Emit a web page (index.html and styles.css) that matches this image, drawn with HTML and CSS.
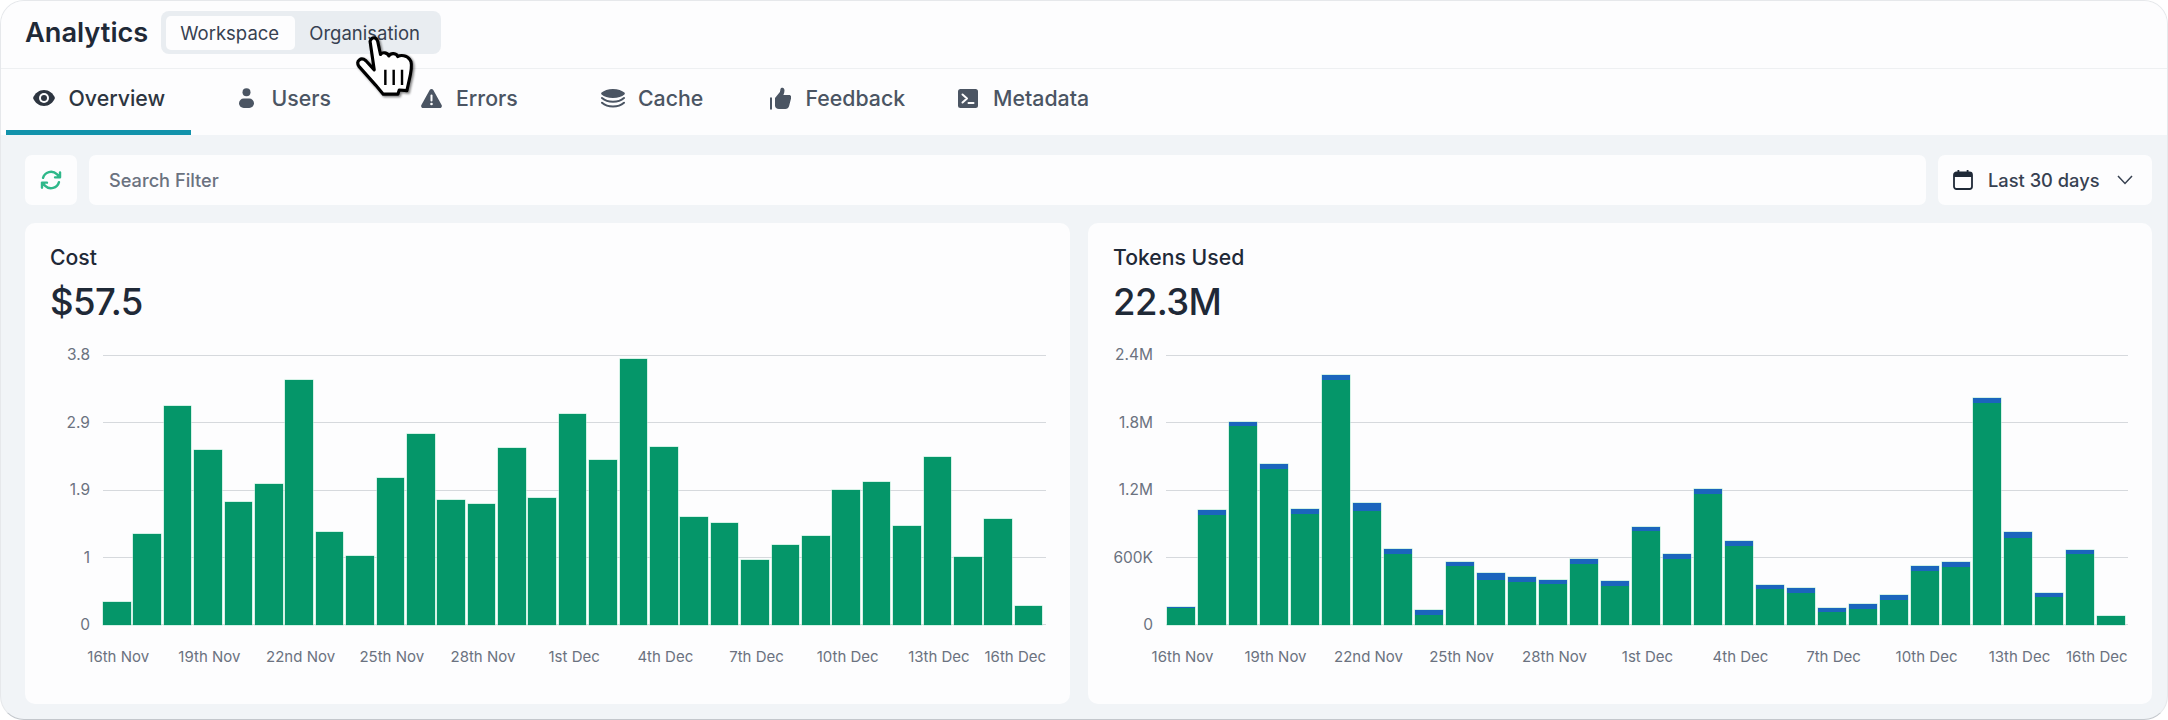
FILE: index.html
```html
<!DOCTYPE html>
<html lang="en">
<head>
<meta charset="utf-8">
<title>Analytics</title>
<link rel="stylesheet" href="styles.css">
</head>
<body>
<div class="frame">
  <header class="header">
    <h1 class="title">Analytics</h1>
    <div class="segment">
      <span class="segment-item segment-active">Workspace</span>
      <span class="segment-item">Organisation</span>
    </div>
  </header>
  <nav class="tabs">
    <a class="tab tab-overview tab-active">
      <span class="tab-icon"><svg width="22" height="16" viewBox="0 0 22 16"><path fill="currentColor" d="M11 0C6 0 2 3.2 0 8c2 4.8 6 8 11 8s9-3.200 11-8c-2-4.800-6-8-11-8z"/><circle cx="11" cy="8" r="5" fill="#fdfdfe"/><circle cx="11" cy="8" r="3" fill="currentColor"/></svg></span>Overview
    </a>
    <a class="tab tab-users">
      <span class="tab-icon"><svg width="15" height="20" viewBox="0 0 15 20"><circle cx="7.500" cy="4.200" r="4" fill="currentColor"/><rect x="0" y="10.500" width="15" height="9.500" rx="4.700" fill="currentColor"/></svg></span>Users
    </a>
    <a class="tab tab-errors">
      <span class="tab-icon"><svg width="21" height="19" viewBox="0 0 21 19"><path fill="currentColor" d="M8.700 1.100c.8-1.400 2.800-1.400 3.600 0l8.300 14.800c.8 1.400-.2 3.100-1.800 3.100H2.200C.6 19-.4 17.300.4 15.900z"/><rect x="9.500" y="5.500" width="2" height="7" rx="1" fill="#fdfdfe"/><circle cx="10.500" cy="15" r="1.300" fill="#fdfdfe"/></svg></span>Errors
    </a>
    <a class="tab tab-cache">
      <span class="tab-icon"><svg width="24" height="19" viewBox="0 0 24 19"><path fill="currentColor" d="M12 0c5 0 9 1.600 11.400 3.600.6.500.6 1.300 0 1.800C21 7.500 17 9 12 9S3 7.500.6 5.400c-.6-.5-.6-1.300 0-1.800C3 1.600 7 0 12 0z"/><path fill="none" stroke="currentColor" stroke-width="2" stroke-linecap="round" d="M1 9c2.500 2.200 6.500 3.800 11 3.800S20.500 11.200 23 9M1 13.700c2.500 2.200 6.500 3.800 11 3.800s8.500-1.600 11-3.800"/></svg></span>Cache
    </a>
    <a class="tab tab-feedback">
      <span class="tab-icon"><svg width="21" height="23" viewBox="0 0 21 23"><rect x="0" y="10.500" width="2" height="12" fill="currentColor"/><path fill="currentColor" d="M5 11l4.500-5.500c.6-.8.8-2 .9-3.300.1-1.600 3.400-2.500 4 .6.300 1.500-.2 3.300-1 5.200h5.500c2.300 0 2.900 2.300 2 4l-1.800 7c-.6 2-1.800 3-3.800 3H9c-2.400 0-4-1.400-4-3.500z"/></svg></span>Feedback
    </a>
    <a class="tab tab-metadata">
      <span class="tab-icon"><svg width="20" height="19" viewBox="0 0 20 19"><rect width="20" height="19" rx="2.500" fill="currentColor"/><path fill="none" stroke="#fdfdfe" stroke-width="2" stroke-linecap="round" stroke-linejoin="round" d="M4.500 5.500 9 9.500l-4.500 4M10.500 14h5"/></svg></span>Metadata
    </a>
  </nav>
  <main class="content">
    <div class="toolbar">
      <button class="refresh" aria-label="Refresh"><svg width="24" height="24" viewBox="0 0 24 24" fill="none" stroke="#2fb88a" stroke-width="2.400" stroke-linecap="round" stroke-linejoin="round"><path d="M16.020 9.350h5V4.360M2.990 19.640v-4.990h4.990M2.990 14.650l3.180 3.180a8.250 8.250 0 0 0 13.800-3.700M4.030 9.870a8.250 8.250 0 0 1 13.800-3.700l3.190 3.180"/></svg></button>
      <div class="search">Search Filter</div>
      <button class="date">
        <svg width="20" height="20" viewBox="0 0 20 20"><rect x="1" y="2.500" width="18" height="16.500" rx="2.500" fill="none" stroke="#1f2937" stroke-width="1.800"/><path fill="#1f2937" d="M1 7V4.500C1 3.300 2 2.500 3 2.500h14c1 0 2 .8 2 2V7z"/><rect x="4.500" y="0" width="1.800" height="3.500" fill="#1f2937"/><rect x="13.700" y="0" width="1.800" height="3.500" fill="#1f2937"/></svg>
        <span class="date-label">Last 30 days</span>
        <svg width="16" height="10" viewBox="0 0 16 10"><path d="M1 1l7 7.500L15 1" fill="none" stroke="#374151" stroke-width="1.500"/></svg>
      </button>
    </div>
    <div class="cards">
      <section class="card">
        <h2 class="card-title">Cost</h2>
        <div class="card-value">$57.5</div>
        <div class="chart">
          <div class="y-axis"><span>3.8</span><span>2.9</span><span>1.9</span><span>1</span><span>0</span></div>
          <div class="plot">
            <div class="grid-lines"><i></i><i></i><i></i><i></i><i></i></div>
            <div class="bars bars-cost">
              <div class="bar"><i class="seg-green" style="height:23px"></i></div>
              <div class="bar"><i class="seg-green" style="height:91px"></i></div>
              <div class="bar"><i class="seg-green" style="height:219px"></i></div>
              <div class="bar"><i class="seg-green" style="height:175.3px"></i></div>
              <div class="bar"><i class="seg-green" style="height:122.7px"></i></div>
              <div class="bar"><i class="seg-green" style="height:141.3px"></i></div>
              <div class="bar"><i class="seg-green" style="height:245px"></i></div>
              <div class="bar"><i class="seg-green" style="height:93.3px"></i></div>
              <div class="bar"><i class="seg-green" style="height:69.3px"></i></div>
              <div class="bar"><i class="seg-green" style="height:147.3px"></i></div>
              <div class="bar"><i class="seg-green" style="height:190.7px"></i></div>
              <div class="bar"><i class="seg-green" style="height:125px"></i></div>
              <div class="bar"><i class="seg-green" style="height:121px"></i></div>
              <div class="bar"><i class="seg-green" style="height:177px"></i></div>
              <div class="bar"><i class="seg-green" style="height:127px"></i></div>
              <div class="bar"><i class="seg-green" style="height:211px"></i></div>
              <div class="bar"><i class="seg-green" style="height:165px"></i></div>
              <div class="bar"><i class="seg-green" style="height:265.7px"></i></div>
              <div class="bar"><i class="seg-green" style="height:177.7px"></i></div>
              <div class="bar"><i class="seg-green" style="height:107.7px"></i></div>
              <div class="bar"><i class="seg-green" style="height:101.7px"></i></div>
              <div class="bar"><i class="seg-green" style="height:65.3px"></i></div>
              <div class="bar"><i class="seg-green" style="height:79.7px"></i></div>
              <div class="bar"><i class="seg-green" style="height:89.3px"></i></div>
              <div class="bar"><i class="seg-green" style="height:135.3px"></i></div>
              <div class="bar"><i class="seg-green" style="height:142.7px"></i></div>
              <div class="bar"><i class="seg-green" style="height:99px"></i></div>
              <div class="bar"><i class="seg-green" style="height:168px"></i></div>
              <div class="bar"><i class="seg-green" style="height:67.7px"></i></div>
              <div class="bar"><i class="seg-green" style="height:105.7px"></i></div>
              <div class="bar"><i class="seg-green" style="height:19.3px"></i></div>
            </div>
          </div>
          <div class="x-axis x-axis-cost">
            <span>16th Nov</span><span>19th Nov</span><span>22nd Nov</span><span>25th Nov</span><span>28th Nov</span><span>1st Dec</span><span>4th Dec</span><span>7th Dec</span><span>10th Dec</span><span>13th Dec</span><span class="x-last">16th Dec</span>
          </div>
        </div>
      </section>
      <section class="card">
        <h2 class="card-title">Tokens Used</h2>
        <div class="card-value">22.3M</div>
        <div class="chart">
          <div class="y-axis"><span>2.4M</span><span>1.8M</span><span>1.2M</span><span>600K</span><span>0</span></div>
          <div class="plot">
            <div class="grid-lines"><i></i><i></i><i></i><i></i><i></i></div>
            <div class="bars bars-tokens">
              <div class="bar"><i class="seg-blue" style="height:1.3px"></i><i class="seg-green" style="height:16.7px"></i></div>
              <div class="bar"><i class="seg-blue" style="height:4.7px"></i><i class="seg-green" style="height:110px"></i></div>
              <div class="bar"><i class="seg-blue" style="height:4.7px"></i><i class="seg-green" style="height:198.7px"></i></div>
              <div class="bar"><i class="seg-blue" style="height:5.7px"></i><i class="seg-green" style="height:155.7px"></i></div>
              <div class="bar"><i class="seg-blue" style="height:5px"></i><i class="seg-green" style="height:111px"></i></div>
              <div class="bar"><i class="seg-blue" style="height:5px"></i><i class="seg-green" style="height:244.7px"></i></div>
              <div class="bar"><i class="seg-blue" style="height:8.3px"></i><i class="seg-green" style="height:113.7px"></i></div>
              <div class="bar"><i class="seg-blue" style="height:4.7px"></i><i class="seg-green" style="height:71px"></i></div>
              <div class="bar"><i class="seg-blue" style="height:4.7px"></i><i class="seg-green" style="height:10px"></i></div>
              <div class="bar"><i class="seg-blue" style="height:4.7px"></i><i class="seg-green" style="height:58.7px"></i></div>
              <div class="bar"><i class="seg-blue" style="height:6.7px"></i><i class="seg-green" style="height:45px"></i></div>
              <div class="bar"><i class="seg-blue" style="height:5.3px"></i><i class="seg-green" style="height:43px"></i></div>
              <div class="bar"><i class="seg-blue" style="height:4.3px"></i><i class="seg-green" style="height:41px"></i></div>
              <div class="bar"><i class="seg-blue" style="height:5px"></i><i class="seg-green" style="height:61.3px"></i></div>
              <div class="bar"><i class="seg-blue" style="height:4.7px"></i><i class="seg-green" style="height:39.3px"></i></div>
              <div class="bar"><i class="seg-blue" style="height:4.7px"></i><i class="seg-green" style="height:93.7px"></i></div>
              <div class="bar"><i class="seg-blue" style="height:5px"></i><i class="seg-green" style="height:66.3px"></i></div>
              <div class="bar"><i class="seg-blue" style="height:5.3px"></i><i class="seg-green" style="height:131px"></i></div>
              <div class="bar"><i class="seg-blue" style="height:5px"></i><i class="seg-green" style="height:79.3px"></i></div>
              <div class="bar"><i class="seg-blue" style="height:4.3px"></i><i class="seg-green" style="height:36px"></i></div>
              <div class="bar"><i class="seg-blue" style="height:4.7px"></i><i class="seg-green" style="height:32px"></i></div>
              <div class="bar"><i class="seg-blue" style="height:4px"></i><i class="seg-green" style="height:12.7px"></i></div>
              <div class="bar"><i class="seg-blue" style="height:4.7px"></i><i class="seg-green" style="height:16.3px"></i></div>
              <div class="bar"><i class="seg-blue" style="height:4.7px"></i><i class="seg-green" style="height:25px"></i></div>
              <div class="bar"><i class="seg-blue" style="height:5.3px"></i><i class="seg-green" style="height:54px"></i></div>
              <div class="bar"><i class="seg-blue" style="height:4.7px"></i><i class="seg-green" style="height:58.3px"></i></div>
              <div class="bar"><i class="seg-blue" style="height:5.7px"></i><i class="seg-green" style="height:221.7px"></i></div>
              <div class="bar"><i class="seg-blue" style="height:5.7px"></i><i class="seg-green" style="height:87px"></i></div>
              <div class="bar"><i class="seg-blue" style="height:4.3px"></i><i class="seg-green" style="height:28px"></i></div>
              <div class="bar"><i class="seg-blue" style="height:4.3px"></i><i class="seg-green" style="height:71px"></i></div>
              <div class="bar"><i class="seg-blue" style="height:.7px"></i><i class="seg-green" style="height:8.7px"></i></div>
            </div>
          </div>
          <div class="x-axis x-axis-tokens">
            <span>16th Nov</span><span>19th Nov</span><span>22nd Nov</span><span>25th Nov</span><span>28th Nov</span><span>1st Dec</span><span>4th Dec</span><span>7th Dec</span><span>10th Dec</span><span>13th Dec</span><span class="x-last">16th Dec</span>
          </div>
        </div>
      </section>
    </div>
  </main>
  <svg class="cursor" width="66" height="66" viewBox="40 40 190 190" aria-hidden="true">
    <path class="cursor-shadow" d="M92 64C96 50 110 50 114 64L122 102C128 94 142 96 146 106C152 96 168 98 172 108C180 102 198 104 206 116C214 124 212 140 208 160L198 206L176 204L172 216H130L108 190L60 136C50 120 66 108 80 120L104 146Z"/>
    <path class="cursor-hand" d="M92 64C96 50 110 50 114 64L122 102C128 94 142 96 146 106C152 96 168 98 172 108C180 102 198 104 206 116C214 124 212 140 208 160L198 206L176 204L172 216H130L108 190L60 136C50 120 66 108 80 120L104 146Z"/>
    <path class="cursor-lines" d="M136 146V190M160 146V190M184 146V190"/>
  </svg>
</div>
</body>
</html>
```
FILE: styles.css
```css
* { box-sizing: border-box; }
html, body { margin: 0; padding: 0; background: #fff; }
body { font-family: Inter, "Noto Sans", sans-serif; color: #1f2937; }

.frame {
  position: relative;
  width: 2168px;
  height: 720px;
  display: flex;
  flex-direction: column;
  overflow: hidden;
  background: #f1f4f7;
  border: 1px solid #e6e8eb;
  border-bottom-color: #c3c7cc;
  border-radius: 24px;
}

.header {
  flex: none;
  height: 68px;
  display: flex;
  align-items: center;
  gap: 13px;
  padding: 0 0 4px 24px;
  background: #fdfdfe;
  border-bottom: 1px solid #eef0f2;
}
.title { margin: 0; font-size: 27.2px; font-weight: 600; color: #1f2937; line-height: 32px; }
.segment {
  display: flex;
  align-items: center;
  width: 280px;
  height: 43px;
  padding: 0 5px;
  background: #e9edf1;
  border-radius: 8px;
}
.segment-item { font-size: 18.5px; color: #374151; height: 34px; line-height: 34px; padding: 0 14px; }
.segment-active { width: 129px; background: #fdfdfe; border-radius: 5px; }

.tabs {
  flex: none;
  height: 66px;
  display: flex;
  padding-left: 5px;
  background: #fdfdfe;
}
.tab {
  display: flex;
  align-items: center;
  height: 66px;
  padding: 0 0 3px 25.5px;
  font-size: 21.3px;
  font-weight: 500;
  color: #4b5563;
  border-bottom: 5px solid transparent;
}
.tab-icon { flex: none; width: 24px; margin-right: 13px; display: flex; justify-content: center; align-items: center; }
.tab-active { color: #2d3540; border-bottom-color: #1292ab; }
.tab-overview { width: 185px; margin-right: 18px; }
.tab-users { width: 184.5px; }
.tab-errors { width: 182px; }
.tab-cache { width: 167.5px; }
.tab-feedback { width: 187.5px; }

.content { flex: 1; padding: 20px 15px 0 24px; display: flex; flex-direction: column; min-height: 0; }
.toolbar { flex: none; display: flex; gap: 12px; height: 50px; margin-bottom: 18px; }
.refresh {
  width: 52px;
  border: 0;
  padding: 0;
  background: #fdfdfe;
  border-radius: 7px;
  display: flex;
  align-items: center;
  justify-content: center;
}
.search {
  flex: 1;
  display: flex;
  align-items: center;
  padding-left: 20px;
  background: #fdfdfe;
  border-radius: 7px;
  font-size: 18.2px;
  font-weight: 500;
  color: #6b7280;
}
.date {
  width: 214px;
  border: 0;
  padding: 0 0 0 15px;
  background: #fdfdfe;
  border-radius: 7px;
  display: flex;
  align-items: center;
  font-family: inherit;
  font-size: 18.3px;
  font-weight: 500;
  color: #374151;
}
.date-label { margin: 0 17px 0 15px; white-space: nowrap; }

.cards { flex: none; display: grid; grid-template-columns: 1045fr 1064fr; gap: 18px; height: 481px; }
.card { background: #fdfdfe; border-radius: 10px; padding: 22px 25px 0; min-width: 0; }
.card-title { margin: 0; font-size: 21.2px; font-weight: 500; line-height: 24px; color: #1f2937; }
.card-value { font-size: 36.5px; font-weight: 500; letter-spacing: -.6px; line-height: 46px; margin-top: 10px; color: #1f2937; }

.chart {
  display: grid;
  grid-template-columns: 40px 1fr;
  column-gap: 13px;
  margin-top: 30px;
}
.y-axis {
  height: 288px;
  margin: -9px 0;
  display: flex;
  flex-direction: column;
  justify-content: space-between;
  align-items: flex-end;
  font-size: 15.5px;
  line-height: 18px;
  color: #6b7280;
  white-space: nowrap;
}
.plot { display: grid; height: 270px; min-width: 0; }
.grid-lines, .bars { grid-area: 1 / 1; }
.grid-lines { display: flex; flex-direction: column; justify-content: space-between; }
.grid-lines i { display: block; height: 1px; background: #d6d9dd; }
.bars { display: flex; align-items: flex-end; }
.bar { display: flex; flex-direction: column; flex: none; box-shadow: 0 0 0 .5px #a9e6cf; }
.bars-cost { gap: 2.8px; }
.bars-cost .bar { width: 27.6px; }
.bars-tokens { gap: 3px; padding-left: 1px; }
.bars-tokens .bar { width: 28px; }
.bar i { display: block; }
.seg-green { background: #059669; }
.seg-blue { background: #1b65bd; }

.x-axis {
  grid-column: 2;
  display: flex;
  margin-top: 22px;
  font-size: 15px;
  line-height: 20px;
  color: #6b7280;
  white-space: nowrap;
}
.x-axis span { flex: none; text-align: center; }
.x-axis-cost { margin-left: -30.4px; }
.x-axis-cost span { width: 91.2px; }
.x-axis-tokens { margin-left: -30px; }
.x-axis-tokens span { width: 93px; }
.x-axis .x-last { flex: 1; width: auto; min-width: 0; display: flex; justify-content: flex-end; }

.cursor { position: absolute; left: 351px; top: 32px; overflow: visible; }
.cursor-shadow { fill: #333; stroke: #333; stroke-width: 10; filter: blur(3px); transform: translate(4px, 4px); opacity: .6; }
.cursor-hand { fill: #fff; stroke: #000; stroke-width: 9; stroke-linejoin: round; }
.cursor-lines { fill: none; stroke: #000; stroke-width: 7; }
```
